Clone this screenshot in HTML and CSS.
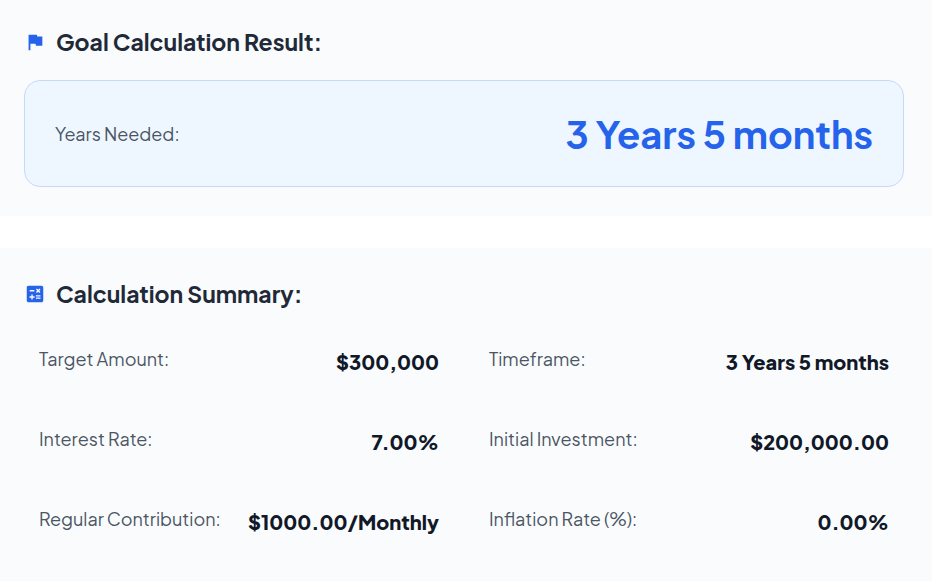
FILE: index.html
```html
<!DOCTYPE html>
<html lang="en">
<head>
    <meta charset="utf-8">
    <title>Goal Calculator</title>
    <link rel="stylesheet" href="styles.css">
</head>
<body>
    <section class="panel panel-result">
        <h2 class="panel-title">
            <svg class="icon" viewBox="0 0 24 24" aria-hidden="true">
                <path d="M14.4 6L14 4H5v17h2v-7h5.6l.4 2h7V6z"/>
            </svg>
            Goal Calculation Result:
        </h2>
        <div class="result-card">
            <span class="label">Years Needed:</span>
            <span class="result-value">3 Years 5 months</span>
        </div>
    </section>

    <section class="panel">
        <h2 class="panel-title">
            <svg class="icon" viewBox="0 0 24 24" aria-hidden="true">
                <path d="M19 3H5c-1.100 0-2 .9-2 2v14c0 1.100.9 2 2 2h14c1.100 0 2-.9 2-2V5c0-1.100-.9-2-2-2zm-5.970 4.060L14.090 6l1.410 1.410L16.910 6l1.060 1.060-1.410 1.410 1.410 1.410-1.060 1.060-1.410-1.400-1.410 1.410-1.060-1.060 1.410-1.410-1.410-1.420zM6.250 7.720h5v1.500h-5v-1.500zM11.500 16h-2v2H8v-2H6v-1.500h2v-2h1.500v2h2V16zm6.500 1.250h-5v-1.500h5v1.500zm0-2.500h-5v-1.500h5v1.500z"/>
            </svg>
            Calculation Summary:
        </h2>
        <dl class="summary">
            <div class="summary-item">
                <dt class="label">Target Amount:</dt>
                <dd class="value">$300,000</dd>
            </div>
            <div class="summary-item">
                <dt class="label">Timeframe:</dt>
                <dd class="value">3 Years 5 months</dd>
            </div>
            <div class="summary-item">
                <dt class="label">Interest Rate:</dt>
                <dd class="value">7.00%</dd>
            </div>
            <div class="summary-item">
                <dt class="label">Initial Investment:</dt>
                <dd class="value">$200,000.00</dd>
            </div>
            <div class="summary-item">
                <dt class="label">Regular Contribution:</dt>
                <dd class="value">$1000.00/Monthly</dd>
            </div>
            <div class="summary-item">
                <dt class="label">Inflation Rate (%):</dt>
                <dd class="value">0.00%</dd>
            </div>
        </dl>
    </section>
</body>
</html>
```
FILE: styles.css
```css
* {
    box-sizing: border-box;
}

body {
    margin: 0;
    padding-right: 14px;
    background-color: #fff;
    color: #111827;
    font-family: "Plus Jakarta Sans", Inter, sans-serif;
}

.panel {
    padding: 30px 28px 29px 24px;
    background-color: #f9fbfd;
}

.panel-result {
    padding-top: 26px;
    margin-bottom: 32px;
}

.panel-title {
    display: flex;
    align-items: center;
    gap: 10px;
    margin: 0 0 22px;
    color: #1f2937;
    font-size: 23px;
    line-height: 32px;
    font-weight: 700;
}

.icon {
    width: 22px;
    height: 22px;
    fill: #2563eb;
}

.result-card {
    display: flex;
    justify-content: space-between;
    align-items: center;
    padding: 28px 30px;
    background-color: #eef6ff;
    border: 1px solid #c7dafa;
    border-radius: 16px;
}

.label {
    color: #4b5563;
    font-size: 18px;
    line-height: 28px;
}

.result-value {
    color: #2563eb;
    font-size: 38px;
    line-height: 49px;
    font-weight: 700;
}

.summary {
    display: grid;
    grid-template-columns: 1fr 1fr;
    gap: 20px;
    margin: 0;
}

.summary-item {
    display: flex;
    justify-content: space-between;
    padding: 13px 15px;
}

.value {
    margin: 0;
    font-size: 20px;
    line-height: 34px;
    font-weight: 800;
    text-align: right;
}
```
